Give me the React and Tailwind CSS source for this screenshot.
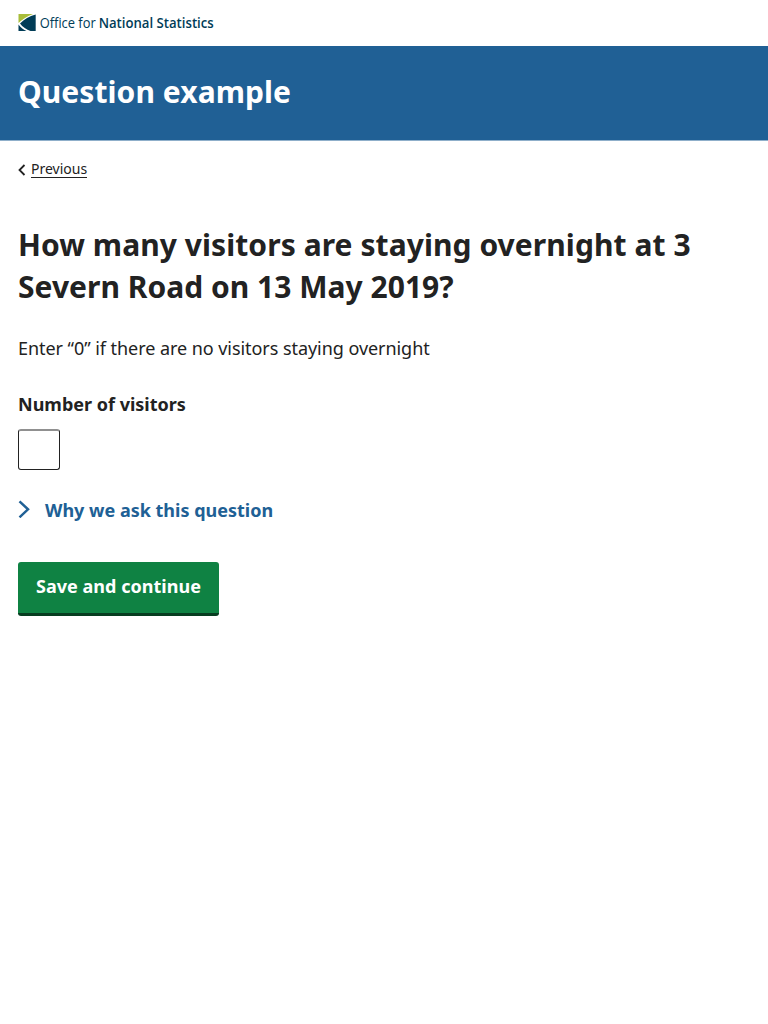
export default function App() {
  return (
    <div className="min-h-screen bg-white font-['Noto_Sans',sans-serif] text-lg text-[#222222] antialiased">
      <header>
        <div className="flex h-[46px] items-center px-[18px]">
          <svg width="198" height="18" viewBox="0 0 198 18" role="img" aria-label="Office for National Statistics" className="overflow-visible">
            <path d="M0.500 0H15C9.500 2 4 5.500 0.500 9z" fill="#a8bd3a" />
            <path d="M17.700 0.500v16.500H12.500C8.500 15.500 4.500 13 2 9.500 6.500 5 11 2 17.700 0.500z" fill="#003c57" />
            <path d="M0.500 10.500c2 2.700 4.500 5 8 6.500H0.500z" fill="#003c57" />
            <text x="21.700" y="13.500" fill="#003c57" fontSize="15" fontFamily="Open Sans, sans-serif" textLength="56" lengthAdjust="spacingAndGlyphs">Office for</text>
            <text x="80.700" y="13.500" fill="#003c57" fontSize="15" fontWeight="650" fontFamily="Open Sans, sans-serif" textLength="115" lengthAdjust="spacingAndGlyphs">National Statistics</text>
          </svg>
        </div>
        <div className="h-[95px] border-b border-[#8fafca] bg-[#206095] px-[18px] pt-[25px]">
          <div className="text-[30px] leading-[42px] font-bold tracking-[0.07px] text-white">Question example</div>
        </div>
      </header>
      <main className="px-[18px] pt-[17px]">
        <a href="#" className="flex h-[22px] items-center text-sm">
          <svg width="8" height="12" viewBox="0 0 8 12" className="relative top-[0.500px] mr-[5px]" fill="none" stroke="#222222" strokeWidth="1.8"><path d="M6.500 1 1.500 6l5 5" /></svg>
          <span className="border-b border-[#222222] leading-[17px]">Previous</span>
        </a>
        <h1 className="mt-11 text-[30px] leading-[42px] font-bold tracking-[0.07px]">How many visitors are staying overnight at 3 <span className="tracking-[0.02px]">Severn Road on 13 May 2019?</span></h1>
        <p className="mt-[26px] leading-[29px] tracking-[-0.055px]">Enter “0” if there are no visitors staying overnight</p>
        <label htmlFor="visitors" className="mt-[27px] block leading-[29px] font-bold">Number of visitors</label>
        <input id="visitors" className="mt-[10px] block h-[41px] w-[42px] rounded-[3px] border border-t-2 border-[#222222] border-t-[#909090]" />
        <div className="mt-[25px] flex h-[30px] items-center font-bold text-[#206095]">
          <svg width="12" height="18" viewBox="0 0 12 18" className="relative top-[-1px] mr-[15px]" fill="none" stroke="#206095" strokeWidth="2.500"><path d="m1.500 1.300 8.500 8-8.500 8" /></svg>
          Why we ask this question
        </div>
        <button className="mt-[37px] h-[54px] w-[201px] rounded-[3px] border-b-[3px] border-[#073d20] bg-[#0f8243] pb-[3px] font-bold tracking-[0.02px] text-white">Save and continue</button>
      </main>
    </div>
  );
}
